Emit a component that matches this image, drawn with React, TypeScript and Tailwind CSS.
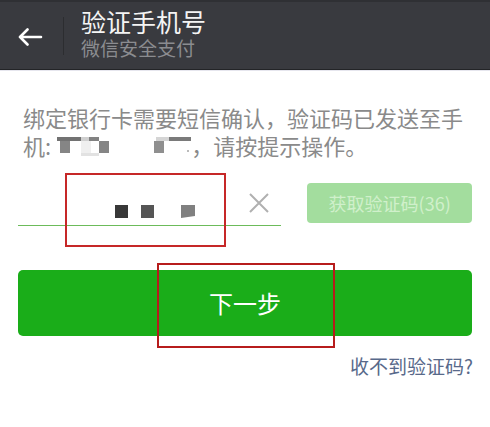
import React from "react";

const font = { fontFamily: '"Noto Sans CJK SC", "Noto Sans", sans-serif' };

export default function App() {
  return (
    <div
      className="relative w-[490px] h-[427px] bg-white overflow-hidden"
      style={font}
    >
      {/* Header */}
      <div className="h-[70px] bg-[#393a3f] border-t-[2px] border-t-[#2f3034] border-b border-b-[#232427] flex">
        <div className="w-[63px] flex items-center justify-center pr-[4px] pt-[2px]">
          <svg width="26" height="18" viewBox="0 0 26 18" fill="none">
            <path
              d="M24 9H3M10.5 1.5L3 9l7.5 7.5"
              stroke="#ffffff"
              strokeWidth="2.6"
              strokeLinecap="round"
              strokeLinejoin="round"
            />
          </svg>
        </div>
        <div className="w-px h-[38px] mt-[15px] bg-[#2c2d30]" />
        <div className="pl-[17px] pt-[6px] flex flex-col">
          <div className="text-[25px] leading-[26px] text-[#f4f4f4]">验证手机号</div>
          <div className="mt-[4px] text-[19px] leading-[20px] text-[#8b8c90]">微信安全支付</div>
        </div>
      </div>
      <div className="h-px bg-[#e6e6ee]" />

      {/* Message */}
      <div className="px-[23px] pt-[32px] text-[22px] leading-[28px] text-[#8a8a8a]">
        <div>绑定银行卡需要短信确认，验证码已发送至手</div>
        <div className="flex whitespace-nowrap">
          <span>机:</span>
          <svg width="140" height="28" className="shrink-0">
            <rect x="6" y="6" width="24" height="4" fill="#727272" />
            <rect x="30" y="6" width="8" height="4" fill="#cfcfcf" />
            <rect x="38" y="6" width="10" height="4" fill="#828282" />
            <rect x="9" y="10" width="10" height="12" fill="#858585" />
            <rect x="30" y="10" width="10" height="12" fill="#efefef" />
            <rect x="48" y="10" width="10" height="12" fill="#858585" />
            <rect x="30" y="22" width="18" height="3" fill="#e2e2e2" />
            <rect x="103" y="10" width="10" height="12" fill="#8f8f8f" />
            <rect x="105" y="6" width="13" height="4" fill="#d5d5d5" />
            <rect x="118" y="6" width="22" height="4" fill="#7a7a7a" />
            <rect x="136" y="19" width="2" height="2" fill="#bbbbbb" />
          </svg>
          <span>，请按提示操作。</span>
        </div>
      </div>

      {/* Input row */}
      <div className="mt-[24px] px-[18px] flex items-start">
        <div className="w-[264px] h-[43px] border-b border-[#6cbb5a] flex items-center">
          <div className="self-end mb-[7px] ml-[97px] flex items-start">
            <div className="w-[13px] h-[13px] bg-[#383838]" />
            <div className="w-[13px] h-[13px] bg-[#555555] ml-[13px]" />
            <svg width="14" height="13" className="ml-[27px]">
              <polygon points="0,0 14,0 14,11 0,13" fill="#808080" />
            </svg>
          </div>
          <div className="ml-auto mr-[12px] -mt-[2px]">
            <svg width="20" height="20" viewBox="0 0 20 20">
              <path
                d="M1 1L19 19M19 1L1 19"
                stroke="#b0b0b0"
                strokeWidth="2"
              />
            </svg>
          </div>
        </div>
        <div className="ml-[26px] w-[165px] h-[40px] rounded-[4px] bg-[#a3dd9e] flex items-center justify-center text-[18px] text-[#d0f0cb]">
          获取验证码(36)
        </div>
      </div>

      {/* Next button */}
      <div className="mt-[44px] mx-[18px] h-[66px] rounded-[5px] bg-[#1aad19] flex items-center justify-center text-[24px] text-white">
        下一步
      </div>

      <div className="mt-[20px] pr-[17px] text-right text-[19px] leading-[19px] text-[#58698a]">
        收不到验证码?
      </div>

      {/* Red annotation boxes */}
      <div className="absolute left-[65px] top-[173px] w-[161px] h-[74px] border-2 border-[#c62828]" />
      <div className="absolute left-[157px] top-[263px] w-[178px] h-[85px] border-2 border-[#b71c1c]" />
    </div>
  );
}
